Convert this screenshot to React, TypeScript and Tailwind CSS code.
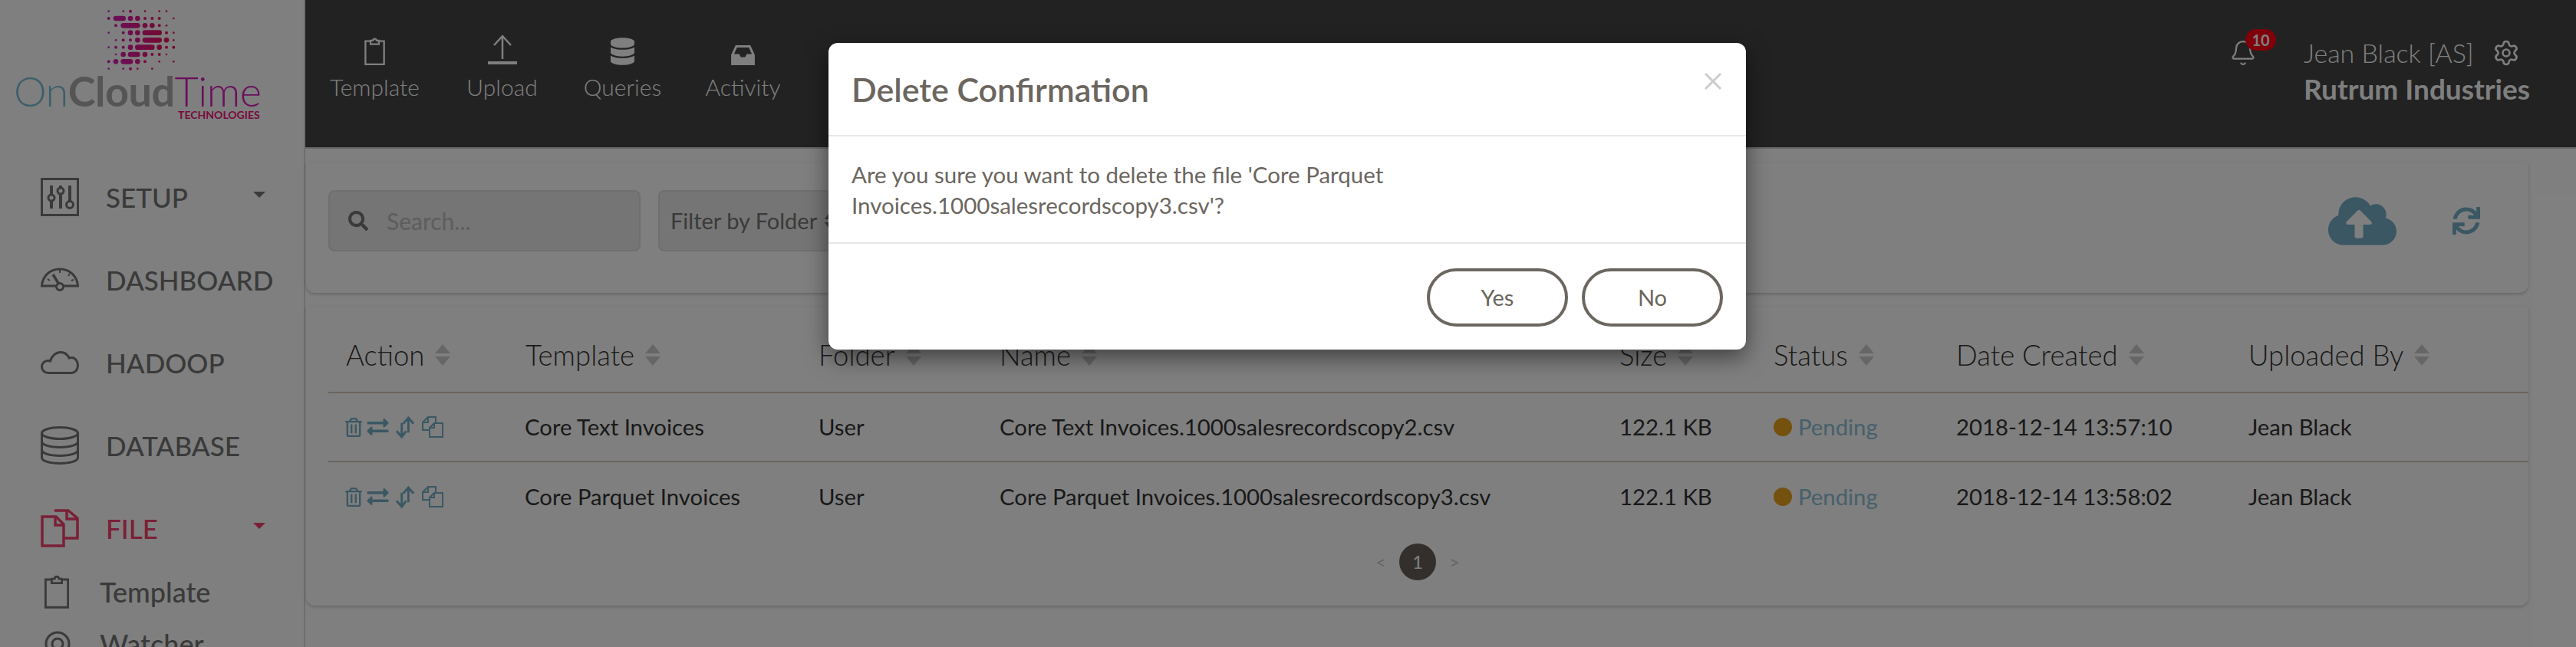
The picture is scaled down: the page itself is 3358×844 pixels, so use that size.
import React from 'react';
import { FaCloudUploadAlt, FaDatabase, FaExchangeAlt, FaRegTrashAlt, FaSearch, FaSync } from 'react-icons/fa';
import { Bell, Settings } from 'lucide-react';

const rows = [
  { template: 'Core Text Invoices', name: 'Core Text Invoices.1000salesrecordscopy2.csv', date: '2018-12-14 13:57:10' },
  { template: 'Core Parquet Invoices', name: 'Core Parquet Invoices.1000salesrecordscopy3.csv', date: '2018-12-14 13:58:02' },
];

const columns = ['Action', 'Template', 'Folder', 'Name', 'Size', 'Status', 'Date Created', 'Uploaded By'];

// logo dot matrix: [x, y, r], coordinates read off the reference
const dots: [number, number, number][] = [
  [425, 44, 4], [482, 44, 4], [510, 44, 6], [567, 44, 4], [623, 44, 4], [651, 44, 4],
  [425, 72, 6], [510, 72, 10], [538, 72, 10], [567, 72, 6], [595, 72, 6], [623, 72, 6], [679, 72, 4],
  [453, 100, 6], [567, 100, 10], [595, 100, 10], [623, 100, 6], [651, 100, 4],
  [425, 128, 4], [482, 128, 6], [510, 128, 10], [538, 128, 10], [651, 128, 6], [679, 128, 4],
  [453, 157, 4], [482, 157, 6], [510, 157, 6], [538, 157, 10], [651, 157, 10], [679, 157, 4],
  [425, 185, 4], [453, 185, 6], [482, 185, 6], [510, 185, 10], [623, 185, 10], [651, 185, 6], [679, 185, 6],
  [453, 213, 4], [482, 213, 10], [567, 213, 10], [595, 213, 6], [623, 213, 6], [651, 213, 4],
  [425, 241, 6], [453, 241, 10], [538, 241, 10], [567, 241, 6], [623, 241, 4], [679, 241, 4],
  [425, 269, 4], [482, 269, 4], [510, 269, 6], [538, 269, 4], [595, 269, 4],
];
const bars: [number, number, number][] = [
  [453, 482, 72], [482, 538, 100], [567, 623, 128], [567, 623, 157], [538, 595, 185], [510, 538, 213], [482, 510, 241],
];

const Logo = () => (
  <div className="relative h-[192px] shrink-0">
    <svg className="absolute left-[140px] top-[1px] w-[90px] h-[82px]" viewBox="420 36 270 246">
      <defs>
        <linearGradient id="logoDots" gradientUnits="userSpaceOnUse" x1="420" y1="0" x2="690" y2="0">
          <stop offset="0" stopColor="#d21fbc" />
          <stop offset="1" stopColor="#f0124e" />
        </linearGradient>
      </defs>
      {dots.map(([x, y, r], i) => (
        <circle key={i} cx={x} cy={y} r={r} fill="url(#logoDots)" />
      ))}
      {bars.map(([a, b, y], i) => (
        <rect key={i} x={a - 10} y={y - 10} width={b - a + 20} height={20} rx={10} fill="url(#logoDots)" />
      ))}
    </svg>
    <div className="absolute left-[18px] top-[85px] whitespace-nowrap text-[54px] leading-[46px] tracking-[-0.5px] font-light">
      <span className="text-[#7cbdd8]">On</span>
      <span className="text-[#aaaaaa] font-bold">Cloud</span>
      <span className="text-[#d41eb8]">Time</span>
    </div>
    <div className="absolute left-[232px] top-[131px] text-[14px] leading-[16px] font-bold text-[#f2147a] whitespace-nowrap">
      TECHNOLOGIES
    </div>
  </div>
);

const SetupIcon = () => (
  <svg viewBox="0 0 50 50" className="w-[50px] h-[50px]" fill="none" stroke="currentColor" strokeWidth="3">
    <rect x="1.5" y="1.5" width="47" height="47" />
    <path d="M14 10v30M26 10v30M38 10v30" strokeWidth="4" />
    <circle cx="14" cy="26" r="4" fill="#fff" strokeWidth="3" />
    <circle cx="26" cy="17" r="4" fill="#fff" strokeWidth="3" />
    <circle cx="38" cy="35" r="4.5" fill="#fff" strokeWidth="3" />
  </svg>
);

const GaugeIcon = () => (
  <svg viewBox="0 0 50 32" className="w-[50px] h-[32px]" fill="none" stroke="currentColor" strokeWidth="3">
    <path d="M21 24H1.5C2.5 11 12 2 25 2s22.500 9 23.500 22H29" />
    <path d="M16 9l8 13" strokeWidth="3.500" />
    <circle cx="25" cy="25" r="4.500" />
    <path d="M9 15l3 2M25 3v4M38 8l-2 3M43 16l-3 1" strokeWidth="2" />
  </svg>
);

const CloudIcon = () => (
  <svg viewBox="0 0 50 30" className="w-[50px] h-[30px]" fill="none" stroke="currentColor" strokeWidth="3">
    <path d="M10 28.500C5 28.500 1.500 25 1.500 20.500c0-4.500 3.500-8 8-8 1.500 0 2.500.3 3 .5C14.500 6 20 1.500 26 1.500c5 0 9 3 11 7.500 1-.3 2-.5 3-.5 5 0 8.500 4.500 8.500 10 0 5.500-3.500 10-8.500 10H10z" />
  </svg>
);

const DatabaseIcon = () => (
  <svg viewBox="0 0 50 50" className="w-[50px] h-[50px]" fill="none" stroke="currentColor" strokeWidth="3">
    <ellipse cx="25" cy="9" rx="23.500" ry="7.500" />
    <path d="M1.500 9v32c0 4.500 10.500 7.500 23.500 7.500s23.500-3 23.500-7.500V9" />
    <path d="M1.500 20c0 4.500 10.500 7.500 23.500 7.500S48.500 24.500 48.500 20M1.500 31c0 4.500 10.500 7.500 23.500 7.500S48.500 35.500 48.500 31" />
  </svg>
);

const FilesIcon = () => (
  <svg viewBox="0 0 50 50" className="w-[50px] h-[50px]" fill="none" stroke="currentColor" strokeWidth="3.500">
    <path d="M2 10h18l10 10v28H2z" />
    <path d="M19 10v11h11" />
    <path d="M18 2h18l12 10v26H31" />
    <path d="M34 2v11h14" />
  </svg>
);

const ClipboardIcon = ({ className }: { className: string }) => (
  <svg viewBox="0 0 34 46" className={className} fill="none" stroke="currentColor" strokeWidth="3">
    <path d="M10 6H1.500v38.500h31V6H24" />
    <path d="M10 11V5h4c0-4 6-4 6 0h4v6z" />
  </svg>
);

const UploadIcon = () => (
  <svg viewBox="0 0 38 40" className="w-[38px] h-[40px]" fill="none" stroke="currentColor" strokeWidth="2.500">
    <path d="M19 2v30M8 14L19 2l11 12" />
    <path d="M0 37h38" strokeWidth="4" />
  </svg>
);

const InboxIcon = () => (
  <svg viewBox="0 0 32 27" className="w-[31px] h-[26px]" fill="currentColor">
    <path fillRule="evenodd" d="M6 0h20l6 13v14H0V13L6 0zm2 3L4 12h7l2 4h6l2-4h7L24 3H8z" />
  </svg>
);

const SwapIcon = () => (
  <svg viewBox="0 0 28 30" className="w-[27px] h-[29px]" fill="none" stroke="currentColor" strokeWidth="3">
    <path d="M9 9v19M2 20l7 8 6-8" />
    <path d="M18 22V2M11 10l7-8 7 8" />
  </svg>
);

const CopyIcon = () => (
  <svg viewBox="0 0 28 28" className="w-[28px] h-[28px]" fill="none" stroke="currentColor" strokeWidth="2">
    <path d="M9 18H1V8l7-7h10v8" />
    <path d="M1 8h7V1" />
    <path d="M16 9h11v18H10V15z" />
    <path d="M10 15h6V9" />
  </svg>
);

const SortArrows = () => (
  <svg viewBox="0 0 20 28" className="w-[20px] h-[28px] ml-[14px] shrink-0 text-[#cccccc]" fill="currentColor">
    <path d="M10 0l10 12H0zM0 16h20L10 28z" />
  </svg>
);

const NavItem = ({ icon, label, caret, active }: { icon: React.ReactNode; label: string; caret?: boolean; active?: boolean }) => (
  <div className={`flex h-[108px] shrink-0 items-center pl-[53px] pr-[50px] ${active ? 'text-[#f4406f]' : 'text-[#747474]'}`}>
    <div className="flex w-[50px] justify-center">{icon}</div>
    <span className="ml-[35px] text-[35px] font-medium leading-none">{label}</span>
    {caret && <span className="ml-auto mb-[6px] h-0 w-0 border-x-[8px] border-t-[8px] border-x-transparent border-t-current" />}
  </div>
);

const TopItem = ({ icon, label, className = '' }: { icon: React.ReactNode; label: string; className?: string }) => (
  <div className={`flex w-[157px] flex-col items-center ${className}`}>
    <div className="flex h-[50px] items-end">{icon}</div>
    <span className="mt-[10px] text-[30px] leading-[36px] font-light">{label}</span>
  </div>
);

const gridCols = 'grid grid-cols-[234px_382px_236px_808px_201px_238px_381px_358px]';

export default function App() {
  return (
    <div className="relative flex h-[844px] w-full overflow-hidden bg-white font-[Lato,sans-serif]">
      <aside className="flex w-[398px] shrink-0 flex-col border-r-[2px] border-[#dddddd] pt-[11px]">
        <Logo />
        <NavItem icon={<SetupIcon />} label="SETUP" caret />
        <NavItem icon={<GaugeIcon />} label="DASHBOARD" />
        <NavItem icon={<CloudIcon />} label="HADOOP" />
        <NavItem icon={<DatabaseIcon />} label="DATABASE" />
        <NavItem icon={<FilesIcon />} label="FILE" caret active />
        <div className="flex h-[58px] shrink-0 items-center pl-[58px] text-[#747474]">
          <ClipboardIcon className="h-[44px] w-[32px]" />
          <span className="ml-[40px] text-[36px] font-medium">Template</span>
        </div>
        <div className="mt-[10px] flex h-[58px] shrink-0 items-center pl-[58px] text-[#747474]">
          <svg viewBox="0 0 34 34" className="h-[34px] w-[34px]" fill="none" stroke="currentColor" strokeWidth="3">
            <circle cx="17" cy="17" r="15" />
            <circle cx="17" cy="17" r="7" />
          </svg>
          <span className="ml-[38px] text-[36px] font-medium">Watcher</span>
        </div>
      </aside>

      <div className="flex min-w-0 flex-1 flex-col">
        <header className="flex h-[194px] shrink-0 items-start border-b-[2px] border-[#cccccc] bg-[#444444] pl-[12px] pt-[35px] text-white">
          <TopItem icon={<ClipboardIcon className="h-[36px] w-[33px]" />} label="Template" />
          <TopItem icon={<UploadIcon />} label="Upload" className="ml-[9px]" />
          <TopItem icon={<FaDatabase className="h-[36px] w-[31px]" />} label="Queries" />
          <TopItem icon={<InboxIcon />} label="Activity" />
          <div className="ml-auto flex pr-[60px]">
            <div className="relative mr-[61px] mt-[16px] h-[36px] w-[36px]">
              <Bell className="h-[36px] w-[36px]" strokeWidth={1.5} />
              <span className="absolute left-[21px] top-[-13px] flex h-[28px] w-[40px] items-center justify-center rounded-[14px] bg-[#ff0010] text-[20px] font-bold leading-none">
                10
              </span>
            </div>
            <div className="flex flex-col pt-[9px]">
              <div className="flex items-center">
                <span className="text-[34px] font-light leading-[50px]">Jean Black [AS]</span>
                <Settings className="ml-[24px] h-[36px] w-[36px]" strokeWidth={1.75} />
              </div>
              <span className="text-[37px] font-bold leading-[44px]">Rutrum Industries</span>
            </div>
          </div>
        </header>

        <main className="flex flex-1 flex-col gap-[18px] pl-[1px] pr-[62px] pt-[18px]">
          <section className="flex h-[170px] shrink-0 items-center rounded-b-[12px] pb-[18px] pl-[29px] pr-[63px] shadow-[0_2px_4px_rgba(0,0,0,0.2)]">
            <div className="flex h-[80px] w-[407px] items-center rounded-[8px] border-[2px] border-[#dfdfdf] bg-[#eaeaea] pl-[24px]">
              <FaSearch className="h-[26px] w-[26px] text-[#747474]" />
              <span className="ml-[24px] text-[30px] text-[#bbbbbb]">Search...</span>
            </div>
            <div className="ml-[23px] flex h-[80px] w-[407px] items-center rounded-[8px] border-[2px] border-[#dfdfdf] bg-[#eaeaea] pl-[14px] text-[29px] text-[#747474]">
              Filter by Folder
              <svg viewBox="0 0 14 24" className="ml-[10px] h-[24px] w-[14px]" fill="currentColor">
                <path d="M7 0l7 10H0zM0 14h14L7 24z" />
              </svg>
            </div>
            <FaCloudUploadAlt className="ml-auto h-[89px] w-[89px] text-[#74aec6]" />
            <FaSync className="ml-[73px] h-[36px] w-[36px] text-[#74aec6]" />
          </section>

          <section className="h-[390px] shrink-0 rounded-b-[12px] pl-[29px] pt-[15px] shadow-[0_2px_4px_rgba(0,0,0,0.2)]">
            <div className={`${gridCols} h-[98px] items-center border-b-[2px] border-[#d6c8ba] text-[36.500px] font-light text-[#333333]`}>
              {columns.map((col) => (
                <div key={col} className="flex items-center pl-[23px]">
                  <span>{col}</span>
                  <SortArrows />
                </div>
              ))}
            </div>
            {rows.map((row, i) => (
              <div
                key={row.name}
                className={`${gridCols} h-[90px] items-center text-[29.300px] text-[#333333] ${i === 0 ? 'border-b-[2px] border-[#d6c8ba]' : ''}`}
              >
                <div className="flex items-center pl-[22px] text-[#74aec6]">
                  <FaRegTrashAlt className="h-[25px] w-[22px]" />
                  <FaExchangeAlt className="ml-[6px] h-[28px] w-[29px]" />
                  <span className="ml-[8px]">
                    <SwapIcon />
                  </span>
                  <span className="ml-[8px]">
                    <CopyIcon />
                  </span>
                </div>
                <div className="pl-[22px]">{row.template}</div>
                <div className="pl-[23px]">User</div>
                <div className="pl-[23px] whitespace-nowrap">{row.name}</div>
                <div className="pl-[23px]">122.1 KB</div>
                <div className="flex items-center pl-[23px]">
                  <span className="h-[24px] w-[24px] rounded-full bg-[#e9a21c]" />
                  <span className="ml-[8px] text-[#8cc0d6]">Pending</span>
                </div>
                <div className="pl-[23px]">{row.date}</div>
                <div className="pl-[23px]">Jean Black</div>
              </div>
            ))}
            <div className="mt-[16px] flex items-center pl-[1365px] text-[24px]">
              <span className="text-[#cccccc]">&lt;</span>
              <span className="ml-[17px] flex h-[48px] w-[48px] items-center justify-center rounded-full bg-[#665e58] text-white">1</span>
              <span className="ml-[17px] text-[#cccccc]">&gt;</span>
            </div>
          </section>
        </main>
      </div>

      {/* modal backdrop + dialog */}
      <div className="absolute inset-0 flex items-start justify-start bg-black/50 pl-[1080px] pt-[56px]">
        <div className="w-[1196px] rounded-[12px] bg-white text-[#6b665f] shadow-[0_10px_30px_rgba(0,0,0,0.5)]">
          <div className="relative flex h-[122px] items-center border-b-[2px] border-[#e6e6e6] pl-[30px]">
            <h2 className="text-[43px] font-semibold leading-none">Delete Confirmation</h2>
            <span className="absolute right-[31px] top-[38px] text-[#cccccc]">
              <svg viewBox="0 0 24 24" className="h-[24px] w-[24px]" fill="none" stroke="currentColor" strokeWidth="3">
                <path d="M2 2l20 20M22 2L2 22" />
              </svg>
            </span>
          </div>
          <div className="h-[140px] border-b-[2px] border-[#e6e6e6] pl-[30px] pt-[30px] text-[29.500px] leading-[40px]">
            Are you sure you want to delete the file 'Core Parquet
            <br />
            Invoices.1000salesrecordscopy3.csv'?
          </div>
          <div className="flex h-[138px] items-start justify-end gap-[18px] pr-[30px] pt-[32px]">
            <button className="h-[76px] w-[184px] rounded-[38px] border-[4px] border-[#6b665f] text-[29px]">Yes</button>
            <button className="h-[76px] w-[184px] rounded-[38px] border-[4px] border-[#6b665f] text-[29px]">No</button>
          </div>
        </div>
      </div>
    </div>
  );
}
